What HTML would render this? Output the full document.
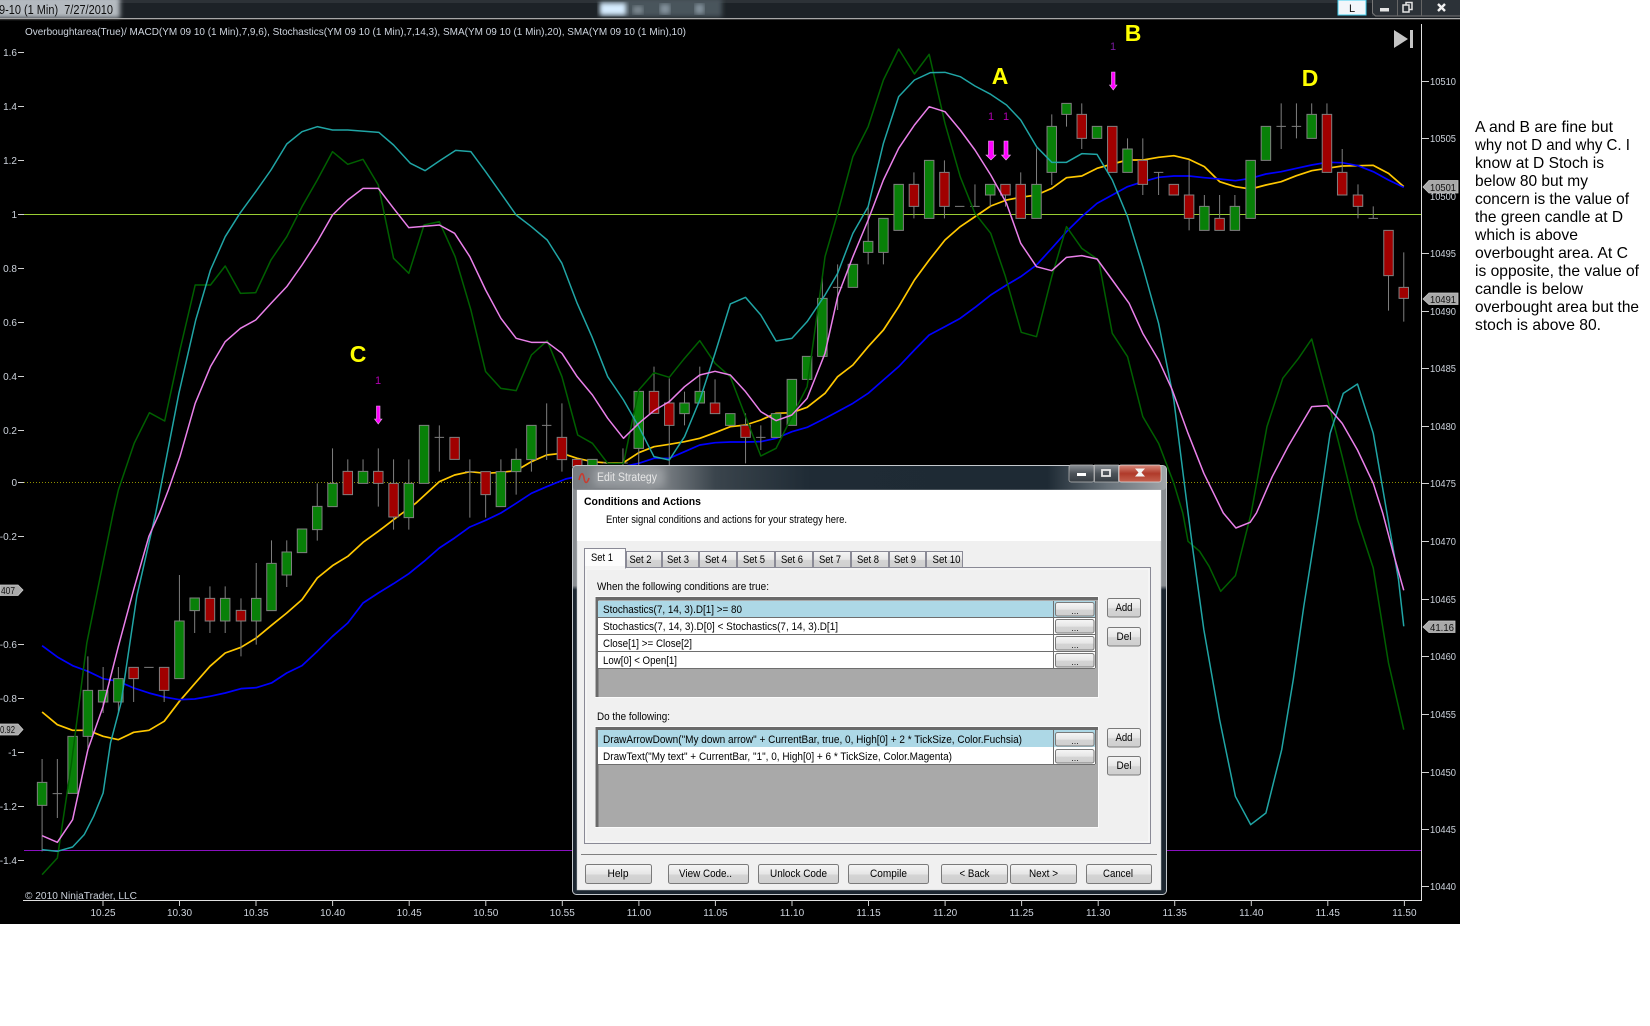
<!DOCTYPE html>
<html><head><meta charset="utf-8"><title>Edit Strategy</title>
<style>
html,body{margin:0;padding:0;background:#fff;width:1650px;height:1026px;overflow:hidden}
svg{display:block;position:absolute;left:0;top:0}
text{font-family:"Liberation Sans",Arial,sans-serif;white-space:pre}
.n{vector-effect:non-scaling-stroke;fill:none;stroke-linejoin:round}
.b{vector-effect:non-scaling-stroke;stroke:#808080;stroke-width:1}
.ax{fill:#cdd3dc;font-size:10px}
.d{fill:#000;font-size:11px}
.rt{fill:#000;font-size:16px}
.btn{fill:url(#bg);stroke:#7a7a7a;stroke-width:1}
</style></head><body>
<svg width="1650" height="1026" viewBox="0 0 1650 1026" xmlns="http://www.w3.org/2000/svg">
<defs>
<linearGradient id="bg" x1="0" y1="0" x2="0" y2="1"><stop offset="0" stop-color="#f6f6f6"/><stop offset=".5" stop-color="#e6e6e6"/><stop offset=".55" stop-color="#d4d4d4"/><stop offset="1" stop-color="#cfcfcf"/></linearGradient>
<linearGradient id="tt" x1="0" y1="0" x2="1" y2="0"><stop offset="0" stop-color="#777b80"/><stop offset=".13" stop-color="#8a8e92"/><stop offset=".24" stop-color="#3a444c"/><stop offset=".4" stop-color="#1f2b35"/><stop offset=".8" stop-color="#1e2a34"/><stop offset=".9" stop-color="#667078"/><stop offset="1" stop-color="#a0a4a8"/></linearGradient>
<linearGradient id="min" x1="0" y1="0" x2="0" y2="1"><stop offset="0" stop-color="#8a8f94"/><stop offset=".5" stop-color="#4c5359"/><stop offset="1" stop-color="#363c42"/></linearGradient>
<linearGradient id="cl" x1="0" y1="0" x2="0" y2="1"><stop offset="0" stop-color="#d88a7c"/><stop offset=".5" stop-color="#b03a2a"/><stop offset="1" stop-color="#c4604e"/></linearGradient>
<linearGradient id="fl" x1="0" y1="0" x2="0" y2="1"><stop offset="0" stop-color="#8a8e92"/><stop offset=".28" stop-color="#8a8e92"/><stop offset=".29" stop-color="#1c2630"/><stop offset="1" stop-color="#1c2630"/></linearGradient>
<filter id="bl"><feGaussianBlur stdDeviation="2.5"/></filter>
<filter id="bl2"><feGaussianBlur stdDeviation="4"/></filter>
</defs>

<rect width="1650" height="1026" fill="#fff"/>
<rect width="1460" height="924" fill="#000"/>

<!-- top bar -->
<rect width="1460" height="18" fill="#1d2227"/>
<rect width="1460" height="3" fill="#2d3237"/>
<rect x="-10" y="-4" width="130" height="22" fill="#b4bac0" filter="url(#bl)"/>
<rect x="600" y="-2" width="122" height="19" fill="#4a545c" filter="url(#bl)"/>
<rect x="600" y="3" width="26" height="12" fill="#d6ecff" filter="url(#bl)"/>
<rect x="633" y="6" width="10" height="8" fill="#7c8890" filter="url(#bl)"/>
<rect x="660" y="4" width="10" height="10" fill="#84929c" filter="url(#bl)"/>
<rect x="695" y="4" width="9" height="10" fill="#84929c" filter="url(#bl)"/>
<text x="-1" y="14" font-size="13" fill="#101010" textLength="114" lengthAdjust="spacingAndGlyphs">9-10 (1 Min)  7/27/2010</text>
<rect x="1372" y="0" width="88" height="16" fill="#2c3238"/>
<path d="M1372.5 0v13l3 3h84.500" fill="none" stroke="#777"/>
<path d="M1397.5 0v16M1421.5 0v16" stroke="#666"/>
<rect x="1338" y="0" width="28" height="15" fill="#f2f6fa" stroke="#3fcdee" stroke-width="1"/>
<text x="1352" y="12" font-size="11" text-anchor="middle" fill="#111">L</text>
<rect x="1380" y="8" width="9" height="3.5" fill="#e4e4e4"/>
<path d="M1403 5h6v7h-6zM1406 5v-2.500h6v7h-3" fill="none" stroke="#e4e4e4" stroke-width="1.500"/>
<path d="M1438 4l7 7M1445 4l-7 7" stroke="#f0f0f0" stroke-width="2.400"/>
<rect y="18" width="1460" height="1" fill="#a8a8a8"/>
<rect y="19" width="1460" height="1" fill="#333"/>

<text x="25" y="35" font-size="10.500" fill="#cfd6e0" textLength="661" lengthAdjust="spacingAndGlyphs">Overboughtarea(True)/ MACD(YM 09 10 (1 Min),7,9,6), Stochastics(YM 09 10 (1 Min),7,14,3), SMA(YM 09 10 (1 Min),20), SMA(YM 09 10 (1 Min),10)</text>

<!-- horizontal levels -->
<path d="M24 214.500H1422" stroke="#9acd32"/>
<path d="M24 482.500H1422" stroke="#8f8f00" stroke-dasharray="1 2"/>
<path d="M24 850.500H1422" stroke="#8a10c0"/>

<g transform="scale(.52615,.33333)">
<!-- SMA lines -->
<polyline class="n" stroke="#ffc800" stroke-width="1.700" points="80,2136 109,2174 138,2191 167,2191 196,2209 225,2219 254,2197 283,2191 312,2164 341,2104 370,2051 399,1999 428,1959 458,1942 487,1914 516,1876 545,1839 574,1799 603,1734 632,1697 661,1669 690,1627 719,1594 748,1559 765,1539 790,1510 835,1445 864,1425 893,1415 923,1420 952,1417 981,1412 1010,1385 1039,1365 1068,1360 1097,1375 1126,1385 1155,1389 1184,1389 1214,1358 1243,1340 1272,1333 1301,1325 1330,1315 1359,1298 1388,1280 1417,1275 1446,1260 1475,1240 1505,1238 1534,1222 1568,1180 1592,1130 1621,1095 1650,1040 1679,990 1708,920 1738,840 1766,780 1796,720 1825,680 1855,648 1883,618 1913,600 1940,592 1970,585 1999,565 2027,533 2056,528 2085,505 2114,492 2143,480 2172,480 2202,472 2231,467 2260,478 2289,500 2318,545 2348,560 2377,567 2406,555 2435,545 2464,527 2493,512 2522,505 2551,498 2581,497 2610,496 2639,520 2668,560"/>
<polyline class="n" stroke="#0000ff" stroke-width="1.700" points="80,1937 109,1971 138,1997 167,2014 196,2036 225,2044 254,2064 283,2079 312,2091 341,2099 370,2097 399,2089 428,2079 458,2066 487,2063 516,2049 545,2019 574,1997 603,1954 632,1909 661,1869 690,1809 719,1779 748,1751 777,1721 806,1684 835,1644 864,1614 893,1581 923,1561 952,1539 981,1510 1010,1480 1039,1460 1075,1437 1214,1390 1243,1375 1272,1375 1301,1355 1330,1335 1359,1328 1388,1326 1417,1326 1446,1325 1475,1315 1505,1295 1534,1282 1568,1255 1592,1235 1621,1210 1650,1180 1679,1140 1708,1100 1738,1050 1766,1005 1796,980 1825,955 1855,920 1883,885 1913,855 1940,830 1970,795 1999,745 2027,695 2056,650 2085,610 2114,585 2143,560 2172,545 2202,532 2231,528 2260,528 2289,533 2318,537 2348,542 2377,535 2406,522 2435,515 2464,505 2493,495 2522,487 2551,488 2581,497 2610,515 2639,540 2668,562"/>
<!-- wicks -->
<path class="n" stroke="#7e7e7e" stroke-width="1" d="M80 2277V2554M109 2277V2454M100 2381h18M167 1969V2244M196 2001V2139M225 2001V2139M254 2002V2106M274 2002h18M312 2002V2106M341 1725V2036M370 1794V1899M399 1759V1899M428 1759V1899M458 1795V1969M487 1689V1934M516 1621V1832M545 1621V1761M603 1450V1622M632 1345V1520M661 1378V1484M690 1378V1450M719 1345V1520M748 1378V1589M777 1378V1589M835 1276V1415M826 1312h18M893 1378V1553M884 1415h18M923 1415V1553M952 1378V1520M981 1345V1484M1010 1276V1415M1039 1210V1380M1030 1276h18M1068 1210V1415M1146 1389h18M1184 1345V1395M1175 1389h18M1214 1174V1395M1243 1100V1240M1272 1135V1395M1301 1175V1276M1330 1100V1209M1359 1138V1241M1417 1240V1390M1446 1276V1350M1437 1312h18M1563 830V1069M1592 793V930M1583 862h18M1650 620V793M1679 655V793M1737 517V655M1795 481V655M1815 619h18M1853 553V619M1844 619h18M1882 553V620M1911 553V620M1940 517V655M1970 445V655M1999 343V555M2027 310V380M2056 310V447M2143 415V517M2172 415V585M2202 517V585M2193 517h18M2260 481V691M2289 585V691M2318 585V691M2347 585V691M2435 310V447M2426 379h18M2464 310V415M2455 379h18M2493 310V415M2522 310V517M2551 447V585M2581 553V655M2610 619V655M2601 655h18M2639 691V932M2668 757V965"/>
<!-- green bodies -->
<path class="b" fill="#088008" d="M71 2347h18V2416h-18zM129 2209h18V2380h-18zM158 2071h18V2209h-18zM187 2071h18V2106h-18zM216 2036h18V2106h-18zM332 1863h18V2036h-18zM361 1794h18V1832h-18zM419 1795h18V1863h-18zM478 1795h18V1863h-18zM507 1690h18V1832h-18zM536 1656h18V1725h-18zM565 1587h18V1658h-18zM594 1519h18V1589h-18zM623 1450h18V1520h-18zM681 1414h18V1450h-18zM768 1450h18V1553h-18zM797 1276h18V1450h-18zM943 1415h18V1520h-18zM972 1378h18V1415h-18zM1001 1276h18V1379h-18zM1117 1378h18V1400h-18zM1205 1174h18V1345h-18zM1292 1209h18V1241h-18zM1321 1174h18V1209h-18zM1379 1241h18V1276h-18zM1466 1241h18V1312h-18zM1496 1138h18V1276h-18zM1525 1069h18V1138h-18zM1554 895h18V1069h-18zM1612 793h18V862h-18zM1641 724h18V757h-18zM1670 655h18V757h-18zM1699 553h18V691h-18zM1757 481h18V655h-18zM1873 553h18V585h-18zM1961 553h18V655h-18zM1990 379h18V517h-18zM2018 310h18V343h-18zM2076 379h18V415h-18zM2134 447h18V517h-18zM2280 619h18V691h-18zM2338 619h18V691h-18zM2368 481h18V655h-18zM2397 379h18V481h-18zM2484 343h18V415h-18z"/>
<!-- red bodies -->
<path class="b" fill="#a00000" d="M245 2002h18V2036h-18zM303 2002h18V2071h-18zM390 1795h18V1863h-18zM449 1831h18V1863h-18zM652 1414h18V1484h-18zM710 1414h18V1450h-18zM739 1450h18V1551h-18zM855 1312h18V1378h-18zM914 1415h18V1484h-18zM1059 1312h18V1379h-18zM1088 1378h18V1400h-18zM1234 1174h18V1240h-18zM1263 1209h18V1276h-18zM1350 1209h18V1241h-18zM1408 1276h18V1312h-18zM1728 553h18V619h-18zM1786 517h18V619h-18zM1902 553h18V585h-18zM1931 553h18V655h-18zM2047 343h18V415h-18zM2105 379h18V517h-18zM2163 481h18V553h-18zM2222 553h18V585h-18zM2251 585h18V655h-18zM2309 655h18V691h-18zM2513 343h18V517h-18zM2542 517h18V585h-18zM2572 585h18V619h-18zM2630 691h18V827h-18zM2659 862h18V895h-18z"/>
<!-- oscillators -->
<polyline class="n" stroke="#006000" stroke-width="1.500" points="80,2624 109,2574 135,2300 165,1929 215,1539 225,1470 255,1330 284,1238 313,1263 342,1050 371,855 400,855 428,798 457,880 486,878 515,780 545,710 574,620 603,540 632,455 661,493 690,478 719,555 748,775 777,820 806,675 835,665 865,770 895,930 923,1115 952,1165 981,1172 1010,1065 1040,1022 1068,1130 1098,1305 1126,1330 1155,1390 1185,1390 1214,1170 1243,1118 1272,1132 1301,1075 1330,1022 1359,1090 1388,1130 1417,1250 1446,1368 1475,1345 1505,1250 1534,1160 1563,830 1568,770 1592,640 1621,470 1650,380 1679,240 1708,147 1738,222 1766,163 1796,370 1825,530 1853,640 1883,700 1911,830 1941,997 1970,1010 1999,830 2027,680 2056,745 2088,780 2114,1000 2143,1070 2172,1250 2202,1330 2231,1450 2248,1539 2258,1624 2280,1654 2298,1699 2320,1774 2348,1727 2378,1539 2408,1280 2438,1135 2468,1075 2493,1017 2522,1190 2551,1370 2580,1559 2610,1704 2639,1989 2668,2189"/>
<polyline class="n" stroke="#20a5a5" stroke-width="1.500" points="80,2549 109,2554 138,2541 160,2504 178,2449 196,2379 210,2229 230,2109 260,1789 296,1539 340,1180 372,960 400,810 428,710 456,640 486,575 515,510 545,432 574,395 603,380 632,390 661,390 720,397 748,435 780,490 808,512 836,482 866,451 895,455 923,515 952,580 981,645 1010,680 1040,720 1068,790 1097,910 1125,1010 1155,1130 1185,1200 1214,1280 1243,1370 1272,1380 1301,1310 1330,1200 1359,1060 1388,912 1417,892 1446,945 1475,1023 1505,1015 1534,965 1568,885 1592,820 1621,700 1650,620 1679,430 1708,290 1738,240 1768,218 1796,217 1825,230 1853,258 1883,283 1913,315 1940,360 1970,440 1999,487 2027,487 2056,461 2085,463 2114,540 2143,650 2172,800 2202,970 2231,1200 2258,1539 2268,1659 2288,1889 2318,2159 2348,2389 2377,2474 2406,2439 2436,2249 2458,2039 2478,1819 2506,1539 2528,1300 2553,1180 2580,1152 2610,1300 2636,1539 2658,1739 2668,1879"/>
<polyline class="n" stroke="#ea80ea" stroke-width="1.500" points="80,2507 109,2527 138,2459 167,2249 196,2119 225,1939 254,1769 283,1609 303,1539 320,1470 342,1370 371,1210 400,1100 428,1025 457,985 486,960 515,910 545,860 574,795 603,725 632,645 661,600 690,565 719,565 748,625 777,683 835,675 864,700 893,770 923,870 952,955 981,1015 1010,1027 1040,1027 1068,1060 1097,1130 1126,1185 1155,1255 1185,1315 1214,1270 1243,1232 1272,1205 1301,1160 1330,1125 1359,1114 1388,1125 1417,1175 1446,1235 1475,1262 1505,1245 1534,1195 1568,1060 1592,890 1621,770 1650,660 1679,540 1708,445 1738,375 1766,320 1796,335 1825,390 1853,450 1883,525 1913,610 1940,730 1970,800 1999,812 2027,772 2056,767 2085,777 2114,840 2146,910 2172,1000 2202,1080 2228,1170 2258,1300 2288,1420 2325,1539 2349,1584 2376,1567 2388,1539 2418,1430 2448,1340 2493,1220 2522,1217 2551,1270 2580,1350 2610,1450 2628,1539 2648,1659 2668,1771"/>
</g>

<!-- arrows -->
<g fill="#ff00ff" stroke="#f0b0f0" stroke-width=".6">
<path d="M988.500 141h5v14h2.500l-5 5-5-5h2.500z"/>
<path d="M1004 141h4v14h2.500l-4.500 5-4.500-5h2.500z"/>
<path d="M376.500 406h3.500v13h2l-3.750 5-3.750-5h2z"/>
<path d="M1111.500 72h3.500v13h2l-3.750 5-3.750-5h2z"/>
</g>
<g font-size="11" text-anchor="middle">
<text x="378" y="384" fill="#b000b0">1</text>
<text x="991" y="120" fill="#b000b0">1</text>
<text x="1006" y="120" fill="#b000b0">1</text>
<text x="1113" y="50" fill="#7a1aa0">1</text>
</g>
<g font-size="23" font-weight="bold" fill="#ffff00" text-anchor="middle">
<text x="358" y="362">C</text>
<text x="1000" y="84">A</text>
<text x="1133" y="41">B</text>
<text x="1310" y="86">D</text>
</g>

<!-- end icon -->
<path d="M1394 30l14 9-14 9z" fill="#c4c4c4"/>
<rect x="1410" y="30" width="3" height="18" fill="#c4c4c4"/>

<!-- axes -->
<path d="M1421.500 24V900.500H23" fill="none" stroke="#e0e0e0"/>
<path stroke="#d0d0d0" d="M103 900v6M179.500 900v6M256 900v6M332.600 900v6M409.200 900v6M485.800 900v6M562.300 900v6M638.900 900v6M715.400 900v6M792 900v6M868.500 900v6M945.100 900v6M1021.600 900v6M1098.200 900v6M1174.700 900v6M1251.300 900v6M1327.800 900v6M1404.400 900v6"/>
<path stroke="#d0d0d0" d="M18 52.500h6M18 106.500h6M18 160.500h6M18 214.500h6M18 268.500h6M18 322.500h6M18 376.500h6M18 430.500h6M18 482.500h6M18 536.500h6M18 644.500h6M18 698.500h6M18 752.500h6M18 806.500h6M18 860.500h6"/>
<path stroke="#d0d0d0" d="M1422 81.500h7M1422 138.500h7M1422 253.500h7M1422 311.500h7M1422 368.500h7M1422 426.500h7M1422 483.500h7M1422 541.500h7M1422 599.500h7M1422 656.500h7M1422 714.500h7M1422 772.500h7M1422 829.500h7M1422 886.500h7"/>
<g class="ax" text-anchor="end">
<text x="17" y="56">1.6</text><text x="17" y="110">1.4</text><text x="17" y="164">1.2</text><text x="17" y="218">1</text><text x="17" y="272">0.8</text><text x="17" y="326">0.6</text><text x="17" y="380">0.4</text><text x="17" y="434">0.2</text><text x="17" y="486">0</text><text x="17" y="540">-0.2</text><text x="17" y="648">-0.6</text><text x="17" y="702">-0.8</text><text x="17" y="756">-1</text><text x="17" y="810">-1.2</text><text x="17" y="864">-1.4</text>
</g>
<g class="ax">
<text x="1430" y="85" textLength="26" lengthAdjust="spacingAndGlyphs">10510</text>
<text x="1430" y="142" textLength="26" lengthAdjust="spacingAndGlyphs">10505</text>
<text x="1430" y="200" textLength="26" lengthAdjust="spacingAndGlyphs">10500</text>
<text x="1430" y="257" textLength="26" lengthAdjust="spacingAndGlyphs">10495</text>
<text x="1430" y="315" textLength="26" lengthAdjust="spacingAndGlyphs">10490</text>
<text x="1430" y="372" textLength="26" lengthAdjust="spacingAndGlyphs">10485</text>
<text x="1430" y="430" textLength="26" lengthAdjust="spacingAndGlyphs">10480</text>
<text x="1430" y="487" textLength="26" lengthAdjust="spacingAndGlyphs">10475</text>
<text x="1430" y="545" textLength="26" lengthAdjust="spacingAndGlyphs">10470</text>
<text x="1430" y="603" textLength="26" lengthAdjust="spacingAndGlyphs">10465</text>
<text x="1430" y="660" textLength="26" lengthAdjust="spacingAndGlyphs">10460</text>
<text x="1430" y="718" textLength="26" lengthAdjust="spacingAndGlyphs">10455</text>
<text x="1430" y="776" textLength="26" lengthAdjust="spacingAndGlyphs">10450</text>
<text x="1430" y="833" textLength="26" lengthAdjust="spacingAndGlyphs">10445</text>
<text x="1430" y="890" textLength="26" lengthAdjust="spacingAndGlyphs">10440</text>
</g>
<g class="ax" text-anchor="middle">
<text x="103" y="916">10.25</text><text x="179.500" y="916">10.30</text><text x="256" y="916">10.35</text><text x="332.600" y="916">10.40</text><text x="409.200" y="916">10.45</text><text x="485.800" y="916">10.50</text><text x="562.300" y="916">10.55</text><text x="638.900" y="916">11.00</text><text x="715.400" y="916">11.05</text><text x="792" y="916">11.10</text><text x="868.500" y="916">11.15</text><text x="945.100" y="916">11.20</text><text x="1021.600" y="916">11.25</text><text x="1098.200" y="916">11.30</text><text x="1174.700" y="916">11.35</text><text x="1251.300" y="916">11.40</text><text x="1327.800" y="916">11.45</text><text x="1404.400" y="916">11.50</text>
</g>
<text x="25" y="899" class="ax" textLength="112" lengthAdjust="spacingAndGlyphs">© 2010 NinjaTrader, LLC</text>

<!-- tags -->
<g fill="#a9a9a9" stroke="#c8c8c8" stroke-width=".8">
<path d="M1423 187l6-6.500h29v12.500h-29z"/>
<path d="M1423 299l6-6h29v11.500h-29z"/>
<path d="M1423 627l6-6h26v11.500h-26z"/>
<path d="M0 585h18l5 5-5 5.500H0z"/>
<path d="M0 724h18l5 5.500-5 5.500H0z"/>
</g>
<g font-size="10.500" fill="#111">
<text x="1430" y="191" textLength="26" lengthAdjust="spacingAndGlyphs">10501</text>
<text x="1430" y="303" textLength="26" lengthAdjust="spacingAndGlyphs">10491</text>
<text x="1430" y="631" textLength="24" lengthAdjust="spacingAndGlyphs">41.16</text>
<text x="1" y="594" textLength="14" lengthAdjust="spacingAndGlyphs">407</text>
<text x="0" y="733" textLength="15" lengthAdjust="spacingAndGlyphs">0.92</text>
</g>

<!-- dialog -->
<rect x="572.500" y="465.500" width="594" height="429" rx="4" fill="url(#fl)" stroke="#c4c8cc"/>
<rect x="573" y="466" width="593" height="24" rx="3" fill="url(#tt)"/>
<rect x="594" y="468" width="70" height="18" fill="#9a9ea2" filter="url(#bl2)"/>
<path d="M579 480c2-8 4-8 5-2s3 6 5 0" fill="none" stroke="#c83c30" stroke-width="1.600"/>
<text x="597" y="481" font-size="11.500" fill="#e6e6e6" textLength="60" lengthAdjust="spacingAndGlyphs">Edit Strategy</text>
<rect x="1069" y="465" width="25" height="17" rx="2" fill="url(#min)" stroke="#bbb" stroke-width=".7"/>
<rect x="1094.500" y="465" width="24" height="17" fill="url(#min)" stroke="#bbb" stroke-width=".7"/>
<rect x="1119" y="465" width="42" height="17" rx="2" fill="url(#cl)" stroke="#ddd" stroke-width=".7"/>
<rect x="1077" y="473" width="9" height="3" fill="#fff"/>
<rect x="1102" y="470" width="8" height="6" fill="none" stroke="#e8e8e8" stroke-width="1.800"/>
<path d="M1135 468.500h10l-3.500 4 3.500 4h-10l3.500-4z" fill="#f4f4f4"/>

<rect x="577" y="490" width="584" height="400" fill="#f0f0f0" stroke="#bfc4c8" stroke-width=".5"/>
<rect x="577" y="490" width="584" height="51" fill="#fff"/>
<text x="584" y="505" font-size="11" font-weight="bold" fill="#000" textLength="117" lengthAdjust="spacingAndGlyphs">Conditions and Actions</text>
<text x="606" y="523" class="d" textLength="241" lengthAdjust="spacingAndGlyphs">Enter signal conditions and actions for your strategy here.</text>

<!-- tab panel -->
<rect x="584.500" y="567.500" width="566" height="276" fill="#f0f0f0" stroke="#8a8a96"/>
<rect x="586" y="569" width="563" height="273" fill="none" stroke="#fafafa"/>
<g fill="url(#bg)" stroke="#8a8a96">
<rect x="626.500" y="551.500" width="35" height="16"/>
<rect x="662.500" y="551.500" width="36" height="16"/>
<rect x="699.500" y="551.500" width="37" height="16"/>
<rect x="737.500" y="551.500" width="37" height="16"/>
<rect x="775.500" y="551.500" width="37" height="16"/>
<rect x="813.500" y="551.500" width="37" height="16"/>
<rect x="851.500" y="551.500" width="37" height="16"/>
<rect x="889.500" y="551.500" width="36" height="16"/>
<rect x="926.500" y="551.500" width="36" height="16"/>
</g>
<path d="M584.500 568v-19.500h41V568z" fill="#fcfcfc" stroke="#8a8a96"/>
<rect x="585" y="566" width="40" height="3" fill="#f4f4f4"/>
<g class="d" text-anchor="middle">
<text x="602" y="561" textLength="22" lengthAdjust="spacingAndGlyphs">Set 1</text><text x="640.500" y="563" textLength="22" lengthAdjust="spacingAndGlyphs">Set 2</text><text x="678" y="563" textLength="22" lengthAdjust="spacingAndGlyphs">Set 3</text><text x="716" y="563" textLength="22" lengthAdjust="spacingAndGlyphs">Set 4</text><text x="754" y="563" textLength="22" lengthAdjust="spacingAndGlyphs">Set 5</text><text x="792" y="563" textLength="22" lengthAdjust="spacingAndGlyphs">Set 6</text><text x="830" y="563" textLength="22" lengthAdjust="spacingAndGlyphs">Set 7</text><text x="868" y="563" textLength="22" lengthAdjust="spacingAndGlyphs">Set 8</text><text x="905" y="563" textLength="22" lengthAdjust="spacingAndGlyphs">Set 9</text><text x="946.500" y="563" textLength="28" lengthAdjust="spacingAndGlyphs">Set 10</text>
</g>
<text x="597" y="590" class="d" textLength="172" lengthAdjust="spacingAndGlyphs">When the following conditions are true:</text>

<!-- grid 1 -->
<rect x="595.500" y="596.500" width="503" height="101" fill="#a9a9a9" stroke="#fafafa"/>
<path d="M597 697V598.500H1098" fill="none" stroke="#6a6a6a" stroke-width="3"/>
<rect x="598" y="601" width="497" height="16" fill="#add8e6"/>
<rect x="598" y="617.500" width="497" height="50.500" fill="#fff"/>
<path d="M598 617.500H1095M598 634.500H1095M598 651.500H1095M598 668.500H1095M1053.500 601V668M1095.500 601V668" stroke="#6e6e6e"/>
<g>
<rect class="btn" x="1055.500" y="602.500" width="38.500" height="13.500" rx="2"/>
<rect class="btn" x="1055.500" y="619.500" width="38.500" height="13.500" rx="2"/>
<rect class="btn" x="1055.500" y="636.500" width="38.500" height="13.500" rx="2"/>
<rect class="btn" x="1055.500" y="653.500" width="38.500" height="13.500" rx="2"/>
</g>
<g font-size="9" fill="#222" text-anchor="middle"><text x="1075" y="614">...</text><text x="1075" y="631">...</text><text x="1075" y="648">...</text><text x="1075" y="665">...</text></g>
<text x="603" y="613" class="d" textLength="139" lengthAdjust="spacingAndGlyphs">Stochastics(7, 14, 3).D[1] &gt;= 80</text>
<text x="603" y="630" class="d" textLength="235" lengthAdjust="spacingAndGlyphs">Stochastics(7, 14, 3).D[0] &lt; Stochastics(7, 14, 3).D[1]</text>
<text x="603" y="647" class="d" textLength="89" lengthAdjust="spacingAndGlyphs">Close[1] &gt;= Close[2]</text>
<text x="603" y="664" class="d" textLength="74" lengthAdjust="spacingAndGlyphs">Low[0] &lt; Open[1]</text>

<text x="597" y="720" class="d" textLength="73" lengthAdjust="spacingAndGlyphs">Do the following:</text>

<!-- grid 2 -->
<rect x="595.500" y="726.500" width="503" height="101" fill="#a9a9a9" stroke="#fafafa"/>
<path d="M597 827V728.500H1098" fill="none" stroke="#6a6a6a" stroke-width="3"/>
<rect x="598" y="730" width="497" height="17" fill="#add8e6"/>
<rect x="598" y="747" width="497" height="17" fill="#fff"/>
<path d="M598 764.500H1095M1053.500 730V764M1095.500 730V764" stroke="#6e6e6e"/>
<rect class="btn" x="1055.500" y="732.500" width="38.500" height="13.500" rx="2"/>
<rect class="btn" x="1055.500" y="749.500" width="38.500" height="13.500" rx="2"/>
<g font-size="9" fill="#222" text-anchor="middle"><text x="1075" y="744">...</text><text x="1075" y="761">...</text></g>
<text x="603" y="743" class="d" textLength="419" lengthAdjust="spacingAndGlyphs">DrawArrowDown("My down arrow" + CurrentBar, true, 0, High[0] + 2 * TickSize, Color.Fuchsia)</text>
<text x="603" y="760" class="d" textLength="349" lengthAdjust="spacingAndGlyphs">DrawText("My text" + CurrentBar, "1", 0, High[0] + 6 * TickSize, Color.Magenta)</text>

<!-- add / del -->
<rect class="btn" x="1107.500" y="598.500" width="33" height="18.500" rx="2"/>
<rect class="btn" x="1107.500" y="627.500" width="33" height="18.500" rx="2"/>
<rect class="btn" x="1107.500" y="728.500" width="33" height="18.500" rx="2"/>
<rect class="btn" x="1107.500" y="756.500" width="33" height="18.500" rx="2"/>
<g class="d" text-anchor="middle">
<text x="1124" y="611" textLength="17" lengthAdjust="spacingAndGlyphs">Add</text><text x="1124" y="640" textLength="15" lengthAdjust="spacingAndGlyphs">Del</text><text x="1124" y="741" textLength="17" lengthAdjust="spacingAndGlyphs">Add</text><text x="1124" y="769" textLength="15" lengthAdjust="spacingAndGlyphs">Del</text>
</g>

<!-- footer -->
<path d="M581 854.500H1157" stroke="#808080"/>
<rect class="btn" x="585.500" y="864.500" width="66" height="19" rx="2"/>
<rect class="btn" x="668.500" y="864.500" width="80" height="19" rx="2"/>
<rect class="btn" x="758.500" y="864.500" width="80" height="19" rx="2"/>
<rect class="btn" x="848.500" y="864.500" width="80" height="19" rx="2"/>
<rect class="btn" x="941.500" y="864.500" width="66" height="19" rx="2"/>
<rect class="btn" x="1010.500" y="864.500" width="66" height="19" rx="2"/>
<rect class="btn" x="1086.500" y="864.500" width="65" height="19" rx="2"/>
<g class="d" text-anchor="middle">
<text x="618" y="877" textLength="21" lengthAdjust="spacingAndGlyphs">Help</text><text x="705.500" y="877" textLength="53" lengthAdjust="spacingAndGlyphs">View Code..</text><text x="798.500" y="877" textLength="57" lengthAdjust="spacingAndGlyphs">Unlock Code</text><text x="888.500" y="877" textLength="37" lengthAdjust="spacingAndGlyphs">Compile</text><text x="974.500" y="877" textLength="30" lengthAdjust="spacingAndGlyphs">&lt; Back</text><text x="1043.500" y="877" textLength="29" lengthAdjust="spacingAndGlyphs">Next &gt;</text><text x="1118" y="877" textLength="30" lengthAdjust="spacingAndGlyphs">Cancel</text>
</g>

<!-- side note -->
<g class="rt">
<text x="1475" y="132" textLength="138" lengthAdjust="spacingAndGlyphs">A and B are fine but</text>
<text x="1475" y="150" textLength="155" lengthAdjust="spacingAndGlyphs">why not D and why C. I</text>
<text x="1475" y="168" textLength="129" lengthAdjust="spacingAndGlyphs">know at D Stoch is</text>
<text x="1475" y="186" textLength="113" lengthAdjust="spacingAndGlyphs">below 80 but my</text>
<text x="1475" y="204" textLength="154" lengthAdjust="spacingAndGlyphs">concern is the value of</text>
<text x="1475" y="222" textLength="148" lengthAdjust="spacingAndGlyphs">the green candle at D</text>
<text x="1475" y="240" textLength="103" lengthAdjust="spacingAndGlyphs">which is above</text>
<text x="1475" y="258" textLength="153" lengthAdjust="spacingAndGlyphs">overbought area. At C</text>
<text x="1475" y="276" textLength="164" lengthAdjust="spacingAndGlyphs">is opposite, the value of</text>
<text x="1475" y="294" textLength="108" lengthAdjust="spacingAndGlyphs">candle is below</text>
<text x="1475" y="312" textLength="164" lengthAdjust="spacingAndGlyphs">overbought area but the</text>
<text x="1475" y="330" textLength="126" lengthAdjust="spacingAndGlyphs">stoch is above 80.</text>
</g>
</svg>
</body></html>
